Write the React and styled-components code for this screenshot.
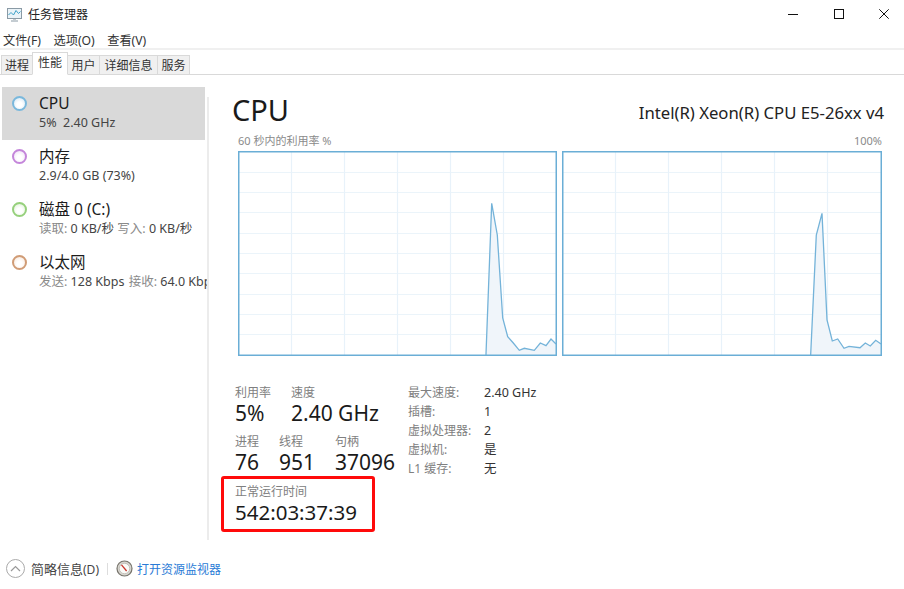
import React from "react";
import styled, { createGlobalStyle } from "styled-components";

const Global = createGlobalStyle`
  html, body { margin: 0; padding: 0; background: #fff; }
  body { font-family: "Noto Sans", "Noto Sans CJK SC", sans-serif; color: #1a1a1a; }
  * { box-sizing: border-box; }
`;

const Window = styled.div`
  width: 904px; height: 589px; display: flex; flex-direction: column; overflow: hidden; background: #fff;
`;
const TitleBar = styled.div`
  height: 29px; display: flex; align-items: center; padding-left: 6px; padding-bottom: 1px; flex: none;
`;
const AppTitle = styled.span`
  font-size: 12px; margin-left: 5px; color: #222;
`;
const WinControls = styled.div`
  margin-left: auto; display: flex; align-items: center; gap: 35.5px; padding-right: 15px;
`;
const MenuBar = styled.div`
  height: 21px; display: flex; align-items: center; gap: 12.5px; padding: 2px 0 0 3px; flex: none;
  border-bottom: 2px solid #f0f0f0;
`;
const MenuItem = styled.span`
  font-size: 12.2px; color: #333;
`;
const Tabs = styled.div`
  height: 25px; display: flex; align-items: flex-end; padding-left: 1px; flex: none;
  border-bottom: 1px solid #d9d9d9;
`;
const Tab = styled.div`
  height: ${p => (p.$active ? "23px" : "20px")};
  width: ${p => p.$w}px;
  margin-bottom: -1px;
  text-align: center;
  font-size: 12px; line-height: ${p => (p.$active ? "20px" : "19px")}; color: #333;
  background: ${p => (p.$active ? "#fff" : "#f0f0f0")};
  border: 1px solid #d9d9d9;
  border-left-width: ${p => (p.$first || p.$active ? "1px" : "0")};
  border-right-width: ${p => (p.$beforeActive ? "0" : "1px")};
  border-bottom: ${p => (p.$active ? "1px solid #fff" : "1px solid #d9d9d9")};
`;
const Body = styled.div`
  flex: 1; display: flex; min-height: 0;
`;
const Sidebar = styled.div`
  width: 209px; flex: none; padding-top: 12px; padding-left: 2px; position: relative; overflow: hidden;
`;
const SideRule = styled.div`
  position: absolute; right: 0; top: 22px; bottom: 8px; width: 2px; background: #ececec;
`;
const SideItem = styled.div`
  width: 203px; height: 53px; display: flex; padding: 7px 0 0 10px; white-space: nowrap;
  background: ${p => (p.$active ? "#d9d9d9" : "transparent")};
`;
const Dot = styled.div`
  width: 15px; height: 15px; border-radius: 50%; margin-top: 2px; flex: none;
  border: 2px solid ${p => p.$c};
  background: radial-gradient(circle at 50% 60%, #fff 30%, ${p => p.$f} 100%);
`;
const SideText = styled.div`
  margin-left: 12px; display: flex; flex-direction: column;
`;
const SideName = styled.div`
  font-size: 15.5px; line-height: 19px; color: #1c1c1c;
`;
const SideSub = styled.div`
  font-size: 12.5px; line-height: 18px; margin-top: 1px; color: #444;
`;
const Dim = styled.span`
  color: #8a8a8a;
  margin-left: ${p => p.$gap || 0}px;
`;
const Main = styled.div`
  flex: 1; padding: 14px 20px 0 24px; display: flex; flex-direction: column; min-width: 0;
`;
const Head = styled.div`
  display: flex; justify-content: space-between; align-items: flex-end; height: 42px;
`;
const Title = styled.div`
  font-size: 29px; line-height: 42px; color: #1a1a1a; margin-left: -1px;
`;
const Model = styled.div`
  font-size: 16.7px; line-height: 21px; margin-bottom: 8px; color: #222;
`;
const GraphCaption = styled.div`
  display: flex; justify-content: space-between; font-size: 11px; line-height: 14px; color: #8a8a8a;
  padding: 3px 2px 0 5px; height: 20px;
`;
const Graphs = styled.div`
  display: flex; gap: 5px; margin-left: 5px;
`;
const GraphSvg = styled.svg`
  display: block; flex: none;
`;
const Stats = styled.div`
  display: flex; margin-top: 29px;
`;
const LeftStats = styled.div`
  width: 173px; flex: none; display: flex; flex-direction: column; margin-left: 2px;
`;
const StatRow = styled.div`
  display: flex; height: 49px;
`;
const Stat = styled.div`
  width: ${p => p.$w}px; flex: none; white-space: nowrap;
`;
const StatLabel = styled.div`
  font-size: 12px; line-height: 16px; color: #808080;
`;
const StatValue = styled.div`
  font-size: 21px; line-height: 24px; color: #1a1a1a;
`;
const RedBox = styled.div`
  width: 154px; height: 56px; margin-left: -14px; margin-top: -7px; padding: 5px 0 0 11px;
  border: 3px solid #ff0a0a; border-radius: 3px; white-space: nowrap;
`;
const Uptime = styled.div`
  font-size: 20.5px; line-height: 24px; color: #1a1a1a;
`;
const RightStats = styled.div`
  display: grid; grid-template-columns: 76px auto; grid-auto-rows: 19px; align-content: start; margin-top: -2px;
`;
const RLabel = styled.div`
  font-size: 12px; line-height: 19px; color: #808080;
`;
const RValue = styled.div`
  font-size: 12.5px; line-height: 19px; color: #333;
`;
const Footer = styled.div`
  height: 41px; flex: none; display: flex; align-items: center; padding-left: 6px;
`;
const Chevron = styled.div`
  width: 19px; height: 19px; border-radius: 50%; border: 1px solid #aaa; display: flex; align-items: center; justify-content: center;
`;
const Brief = styled.span`
  font-size: 13px; margin-left: 6px; color: #444;
`;
const BriefKey = styled.span`
  font-size: 12px;
`;
const Sep = styled.div`
  width: 1px; height: 12px; background: #ddd; margin: 0 8px 0 8px;
`;
const MonLink = styled.span`
  font-size: 12px; margin-left: 4px; color: #2a7bd6;
`;

const W1 = [[486,355],[486,354.3],[491.7,203.3],[497.3,235],[502.7,318],[507.7,336.7],[513.3,343],[519.3,350.3],[524.3,348.3],[534.3,350.3],[540.3,343],[546,345.7],[551,339],[556,344]];
const W2 = [[810.7,355],[810.7,354.3],[816.3,235],[822,213.3],[827,320],[832.3,341],[837.7,339],[844,348.3],[849,346.3],[860,347.7],[865.3,343],[870.3,346],[875.7,340.3],[881,344]];

function Graph({ data, x0, w, vx }) {
  const y0 = 151, h = 205;
  const pts = data.map(([x, y]) => `${(x - x0).toFixed(1)},${(y - y0).toFixed(1)}`).join(" ");
  const last = data[data.length - 1];
  const area = `${pts} ${(last[0] - x0).toFixed(1)},${h - 1} ${(data[0][0] - x0).toFixed(1)},${h - 1}`;
  const hs = [1, 2, 3, 4, 5, 6, 7, 8, 9].map(i => 0.5 + i * 20.3);
  return (
    <GraphSvg width={w} height={h} viewBox={`0 0 ${w} ${h}`}>
      {hs.map(y => <line key={y} x1="0" x2={w} y1={Math.round(y) + 0.5} y2={Math.round(y) + 0.5} stroke="#ebf4fa" strokeWidth="1.2" />)}
      {vx.map(x => <line key={x} x1={x + 0.5} x2={x + 0.5} y1="0" y2={h} stroke="#e8f2fa" strokeWidth="1.2" />)}
      <polygon points={area} fill="#f0f5fa" />
      <polyline points={pts} fill="none" stroke="#74b3d9" strokeWidth="1.3" />
      <rect x="0.75" y="0.75" width={w - 1.5} height={h - 1.5} fill="none" stroke="#6aaed6" strokeWidth="1.5" />
    </GraphSvg>
  );
}

function AppIcon() {
  return (
    <svg width="17" height="17" viewBox="0 0 17 17">
      <rect x="1.5" y="2.5" width="14" height="10" fill="#eaf3f8" stroke="#8a9aa5" />
      <path d="M2.5 9 L5 6.5 L7.5 9 L10 4.5 L12.5 7.5 L14.5 5.5" fill="none" stroke="#3aa0c8" strokeWidth="1" />
      <path d="M5 15 H12 M7 13 H10" stroke="#8a9aa5" strokeWidth="1" fill="none" />
    </svg>
  );
}

function MonitorIcon() {
  return (
    <svg width="17" height="17" viewBox="0 0 17 17">
      <circle cx="8.5" cy="8.5" r="7.5" fill="#d8d6d0" stroke="#77746c" strokeWidth="1.2" />
      <circle cx="8.5" cy="8.5" r="5.2" fill="#fbfbf8" stroke="#a9a69e" strokeWidth="0.6" />
      <path d="M5.5 4.8 L10.6 11" stroke="#c8352b" strokeWidth="1.3" />
    </svg>
  );
}

const SIDE = [
  { c: "#7ab8dc", f: "#cfe4f2", name: "CPU", sub: <>5% &nbsp;2.40 GHz</>, active: true },
  { c: "#c486da", f: "#eddcf4", name: "内存", sub: "2.9/4.0 GB (73%)" },
  { c: "#96d07c", f: "#dcf0d2", name: "磁盘 0 (C:)", sub: <><Dim>读取:</Dim> 0 KB/秒 <Dim>写入:</Dim> 0 KB/秒</> },
  { c: "#d09c76", f: "#f6e3d4", name: "以太网", sub: <><Dim>发送:</Dim> 128 Kbps <Dim $gap={1}>接收:</Dim> 64.0 Kbps</> },
];

const RIGHT = [["最大速度:", "2.40 GHz"], ["插槽:", "1"], ["虚拟处理器:", "2"], ["虚拟机:", "是"], ["L1 缓存:", "无"]];
const VX = [53, 106, 159, 212, 265];

export default function App() {
  return (
    <Window>
      <Global />
      <TitleBar>
        <AppIcon />
        <AppTitle>任务管理器</AppTitle>
        <WinControls>
          <svg width="10" height="10" viewBox="0 0 10 10"><path d="M0 5.5 H10" stroke="#111" /></svg>
          <svg width="10" height="10" viewBox="0 0 10 10"><rect x="0.5" y="0.5" width="9" height="9" fill="none" stroke="#111" /></svg>
          <svg width="10" height="10" viewBox="0 0 10 10"><path d="M0.3 0.3 L9.7 9.7 M9.7 0.3 L0.3 9.7" stroke="#111" /></svg>
        </WinControls>
      </TitleBar>
      <MenuBar>
        <MenuItem>文件(F)</MenuItem>
        <MenuItem>选项(O)</MenuItem>
        <MenuItem>查看(V)</MenuItem>
      </MenuBar>
      <Tabs>
        <Tab $first $beforeActive $w={31}>进程</Tab>
        <Tab $active $w={36}>性能</Tab>
        <Tab $w={32}>用户</Tab>
        <Tab $w={58}>详细信息</Tab>
        <Tab $w={32}>服务</Tab>
      </Tabs>
      <Body>
        <Sidebar>
          {SIDE.map(s => (
            <SideItem key={s.name} $active={s.active}>
              <Dot $c={s.c} $f={s.f} />
              <SideText>
                <SideName>{s.name}</SideName>
                <SideSub>{s.sub}</SideSub>
              </SideText>
            </SideItem>
          ))}
          <SideRule />
        </Sidebar>
        <Main>
          <Head>
            <Title>CPU</Title>
            <Model>Intel(R) Xeon(R) CPU E5-26xx v4</Model>
          </Head>
          <GraphCaption><span>60 秒内的利用率 %</span><span>100%</span></GraphCaption>
          <Graphs>
            <Graph data={W1} x0={238} w={319} vx={VX} />
            <Graph data={W2} x0={562} w={320} vx={VX} />
          </Graphs>
          <Stats>
            <LeftStats>
              <StatRow>
                <Stat $w={56}><StatLabel>利用率</StatLabel><StatValue>5%</StatValue></Stat>
                <Stat $w={110}><StatLabel>速度</StatLabel><StatValue>2.40 GHz</StatValue></Stat>
              </StatRow>
              <StatRow>
                <Stat $w={44}><StatLabel>进程</StatLabel><StatValue>76</StatValue></Stat>
                <Stat $w={56}><StatLabel>线程</StatLabel><StatValue>951</StatValue></Stat>
                <Stat $w={70}><StatLabel>句柄</StatLabel><StatValue>37096</StatValue></Stat>
              </StatRow>
              <RedBox>
                <StatLabel>正常运行时间</StatLabel>
                <Uptime>542:03:37:39</Uptime>
              </RedBox>
            </LeftStats>
            <RightStats>
              {RIGHT.map(([l, v]) => (
                <React.Fragment key={l}>
                  <RLabel>{l}</RLabel>
                  <RValue>{v}</RValue>
                </React.Fragment>
              ))}
            </RightStats>
          </Stats>
        </Main>
      </Body>
      <Footer>
        <Chevron>
          <svg width="11" height="7" viewBox="0 0 11 7"><path d="M1 6 L5.5 1.5 L10 6" fill="none" stroke="#999" strokeWidth="1.2" /></svg>
        </Chevron>
        <Brief>简略信息<BriefKey>(D)</BriefKey></Brief>
        <Sep />
        <MonitorIcon />
        <MonLink>打开资源监视器</MonLink>
      </Footer>
    </Window>
  );
}
